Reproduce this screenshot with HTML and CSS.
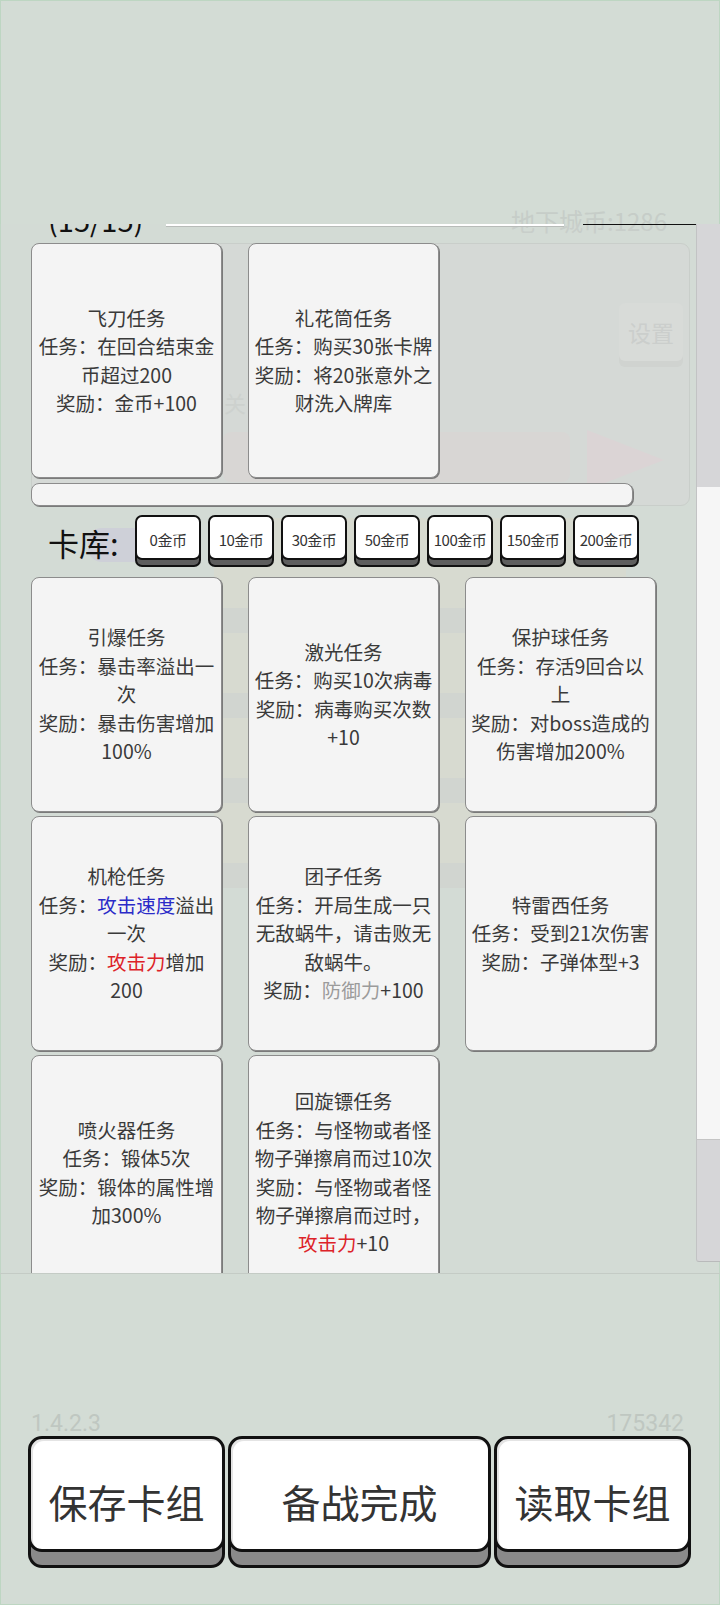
FILE: index.html
```html
<!DOCTYPE html>
<html lang="zh-CN">
<head>
  <meta charset="UTF-8" />
  <meta name="viewport" content="width=device-width, initial-scale=1.0"/>
  <title>卡组编辑</title>
  <link rel="stylesheet" href="styles.css">
</head>
<body>

  <div class="screen">

    <!-- faded game screen behind the deck editor -->
    <div class="ghost">
      <div class="ghost-coins">地下城币:1286</div>
      <div class="ghost-mode">简单</div>
      <div class="ghost-box"></div>
      <div class="ghost-settings">设置</div>
      <div class="ghost-close">关</div>
      <div class="ghost-start">开</div>
      <div class="ghost-arrow"></div>
      <div class="ghost-editor">
        <div class="ghost-band"></div>
        <div class="ghost-band"></div>
        <div class="ghost-band"></div>
        <div class="ghost-band"></div>
      </div>
      <div class="ghost-icon"></div>
    </div>

    <section class="deck-panel">
      <div class="deck-scroll">
        <div class="deck-head">
          <span class="deck-count">(15/15)</span>
          <span class="head-line head-line-light"></span>
          <span class="head-line head-line-dark"></span>
        </div>

        <div class="card-grid">
          <div class="card">
            <div>飞刀任务</div>
            <div>任务：在回合结束金币超过200</div>
            <div>奖励：金币+100</div>
          </div>
          <div class="card">
            <div>礼花筒任务</div>
            <div>任务：购买30张卡牌</div>
            <div>奖励：将20张意外之财洗入牌库</div>
          </div>
        </div>

        <div class="drop-bar"></div>

        <div class="library-bar">
          <span class="library-label">卡库:</span>
          <div class="coin-filters">
            <button class="coin-btn">0金币</button>
            <button class="coin-btn">10金币</button>
            <button class="coin-btn">30金币</button>
            <button class="coin-btn">50金币</button>
            <button class="coin-btn">100金币</button>
            <button class="coin-btn">150金币</button>
            <button class="coin-btn">200金币</button>
          </div>
        </div>

        <div class="card-grid library-grid">
          <div class="card">
            <div>引爆任务</div>
            <div>任务：暴击率溢出一次</div>
            <div>奖励：暴击伤害增加100%</div>
          </div>
          <div class="card">
            <div>激光任务</div>
            <div>任务：购买10次病毒</div>
            <div>奖励：病毒购买次数+10</div>
          </div>
          <div class="card">
            <div>保护球任务</div>
            <div>任务：存活9回合以上</div>
            <div>奖励：对boss造成的伤害增加200%</div>
          </div>
          <div class="card">
            <div>机枪任务</div>
            <div>任务：<span class="hl-blue">攻击速度</span>溢出一次</div>
            <div>奖励：<span class="hl-red">攻击力</span>增加200</div>
          </div>
          <div class="card">
            <div>团子任务</div>
            <div>任务：开局生成一只无敌蜗牛，请击败无敌蜗牛。</div>
            <div>奖励：<span class="hl-grey">防御力</span>+100</div>
          </div>
          <div class="card">
            <div>特雷西任务</div>
            <div>任务：受到21次伤害</div>
            <div>奖励：子弹体型+3</div>
          </div>
          <div class="card">
            <div>喷火器任务</div>
            <div>任务：锻体5次</div>
            <div>奖励：锻体的属性增加300%</div>
          </div>
          <div class="card">
            <div>回旋镖任务</div>
            <div>任务：与怪物或者怪物子弹擦肩而过10次</div>
            <div>奖励：与怪物或者怪物子弹擦肩而过时，<span class="hl-red">攻击力</span>+10</div>
          </div>
        </div>
      </div>

      <div class="scrollbar">
        <div class="scroll-thumb"></div>
      </div>
    </section>

    <footer class="action-area">
      <div class="version-row">
        <span>1.4.2.3</span>
        <span>175342</span>
      </div>
      <div class="action-buttons">
        <button class="action-btn">保存卡组</button>
        <button class="action-btn action-btn-wide">备战完成</button>
        <button class="action-btn">读取卡组</button>
      </div>
    </footer>

  </div>

</body>
</html>
```

FILE: styles.css
```css
body {
  margin: 0;
  font-family: 'Noto Sans CJK SC', 'Noto Sans', sans-serif;
  background: #d3dcd5;
  color: #3a3a3a;
}

.screen {
  position: relative;
  width: 720px;
  height: 1605px;
  padding-top: 224px;
  box-sizing: border-box;
  overflow: hidden;
  box-shadow: inset 0 0 0 1px #bdd6c2;
}

/* ---------- faded background ---------- */

.ghost {
  position: absolute;
  inset: 0;
  z-index: 0;
  color: #c6cdc8;
}

.ghost-coins {
  position: absolute;
  left: 511px;
  top: 203px;
  font-size: 24px;
}

.ghost-mode {
  position: absolute;
  left: 566px;
  top: 240px;
  font-size: 22px;
}

.ghost-box {
  position: absolute;
  left: 31px;
  top: 243px;
  width: 657px;
  height: 261px;
  border: 1px solid #c7cdc8;
  border-radius: 9px;
  background: #d5dad6;
}

.ghost-settings {
  position: absolute;
  left: 619px;
  top: 303px;
  width: 64px;
  height: 58px;
  border-radius: 6px;
  background: #d9dcd9;
  box-shadow: 0 6px 0 #cfd3cf;
  font-size: 23px;
  line-height: 58px;
  text-align: center;
  color: #c9cdca;
}

.ghost-close {
  position: absolute;
  left: 224px;
  top: 386px;
  font-size: 22px;
  color: #ccd1cd;
}

.ghost-start {
  position: absolute;
  left: 223px;
  top: 432px;
  width: 347px;
  height: 50px;
  border-radius: 8px;
  background: #d9d6d4;
  font-size: 40px;
  line-height: 50px;
  text-align: center;
  color: #cdcac9;
}

.ghost-arrow {
  position: absolute;
  left: 587px;
  top: 430px;
  width: 0;
  height: 0;
  border-left: 77px solid #dcd4d5;
  border-top: 30px solid transparent;
  border-bottom: 30px solid transparent;
}

.ghost-editor {
  position: absolute;
  left: 214px;
  top: 518px;
  width: 412px;
  height: 370px;
  background: #d8dbcf;
  display: flex;
  flex-direction: column;
  gap: 60px;
  padding-top: 90px;
  box-sizing: border-box;
}

.ghost-band {
  height: 28px;
  background: #d1d5cf;
}

.ghost-icon {
  position: absolute;
  left: 88px;
  top: 528px;
  width: 60px;
  height: 34px;
  border-radius: 14px;
  background: #cdcfd9;
}

/* ---------- deck panel ---------- */

.deck-panel {
  position: relative;
  z-index: 1;
  display: flex;
  height: 1049px;
  border-bottom: 1px solid #c4cbc5;
  overflow: hidden;
  background: rgba(214, 214, 214, 0.15);
}

.deck-scroll {
  flex: 1;
  padding-left: 31px;
}

.deck-head {
  display: flex;
  height: 44px;
  margin-top: -25px;
}

.deck-count {
  margin-left: 17px;
  padding-top: 3px;
  font-size: 29px;
  line-height: 34px;
  color: #111;
}

.head-line {
  margin-top: 24px;
  height: 3px;
}

.head-line-light {
  width: 398px;
  margin-left: 23px;
  background: #fff;
  box-shadow: 0 1px 0 #b8bcb9;
}

.head-line-dark {
  width: 113px;
  margin-left: 19px;
  height: 2px;
  background: #111;
}

.card-grid {
  display: grid;
  grid-template-columns: repeat(3, 191px);
  grid-auto-rows: 235px;
  column-gap: 26px;
  row-gap: 4px;
}

.card {
  display: flex;
  flex-direction: column;
  justify-content: center;
  padding: 0 4px;
  background: #f4f4f4;
  border: 1px solid #8c8c8c;
  border-radius: 8px;
  box-shadow: 1px 1px 0 #7a7a7a;
  font-size: 19.5px;
  line-height: 28.4px;
  text-align: center;
  color: #3a3a3a;
}

.hl-blue {
  color: #2b2bc8;
}

.hl-red {
  color: #dd2228;
}

.hl-grey {
  color: #9b9b9b;
}

.drop-bar {
  width: 600px;
  height: 21px;
  margin-top: 5px;
  background: #f4f4f4;
  border: 1px solid #8c8c8c;
  border-radius: 8px;
  box-shadow: 1px 1px 0 #7a7a7a;
}

.library-bar {
  display: flex;
  align-items: flex-start;
  height: 52px;
  margin-top: 9px;
}

.library-label {
  width: 87px;
  margin-left: 17px;
  padding-top: 8px;
  font-size: 31px;
  line-height: 40px;
  color: #111;
}

.coin-filters {
  display: flex;
  gap: 7px;
}

.coin-btn {
  width: 66px;
  height: 45px;
  padding: 3px 0 0;
  border: 2px solid #111;
  border-radius: 7px;
  background: #fff;
  box-shadow: 0 7px 0 -2px #5e5e5e, 0 7px 0 0 #111;
  font-family: 'Noto Sans CJK SC', sans-serif;
  font-size: 15px;
  color: #333;
  white-space: nowrap;
  letter-spacing: -0.5px;
}

.library-grid {
  margin-top: 10px;
}

/* ---------- scrollbar ---------- */

.scrollbar {
  width: 25px;
  height: 1038px;
  background: #d6d6d8;
  border-left: 1px solid #c2c3c4;
  border-bottom: 1px solid #b9babb;
  border-radius: 0 0 0 3px;
  box-sizing: border-box;
  padding-top: 263px;
}

.scroll-thumb {
  height: 652px;
  background: #f6f6f6;
  border-bottom: 1px solid #c4c4c4;
}

/* ---------- bottom actions ---------- */

.action-area {
  position: relative;
  z-index: 1;
  padding: 0 28px;
}

.version-row {
  display: flex;
  justify-content: space-between;
  align-items: flex-end;
  height: 162px;
  padding: 0 8px 0 3px;
  font-family: Roboto, 'Liberation Sans', sans-serif;
  font-size: 23px;
  line-height: 24px;
  color: #bfc7c1;
}

.action-buttons {
  display: flex;
  gap: 3px;
}

.action-btn {
  width: 197px;
  height: 116px;
  padding: 14px 0 0;
  border: 3px solid #111;
  border-radius: 14px;
  background: #fff;
  box-shadow: inset 2px 2px 0 #e4e4e4, 0 16px 0 -3px #8a8a8a, 0 16px 0 0 #111;
  font-family: 'Noto Sans CJK SC', sans-serif;
  font-size: 39px;
  color: #333;
}

.action-btn-wide {
  width: 263px;
}
```
